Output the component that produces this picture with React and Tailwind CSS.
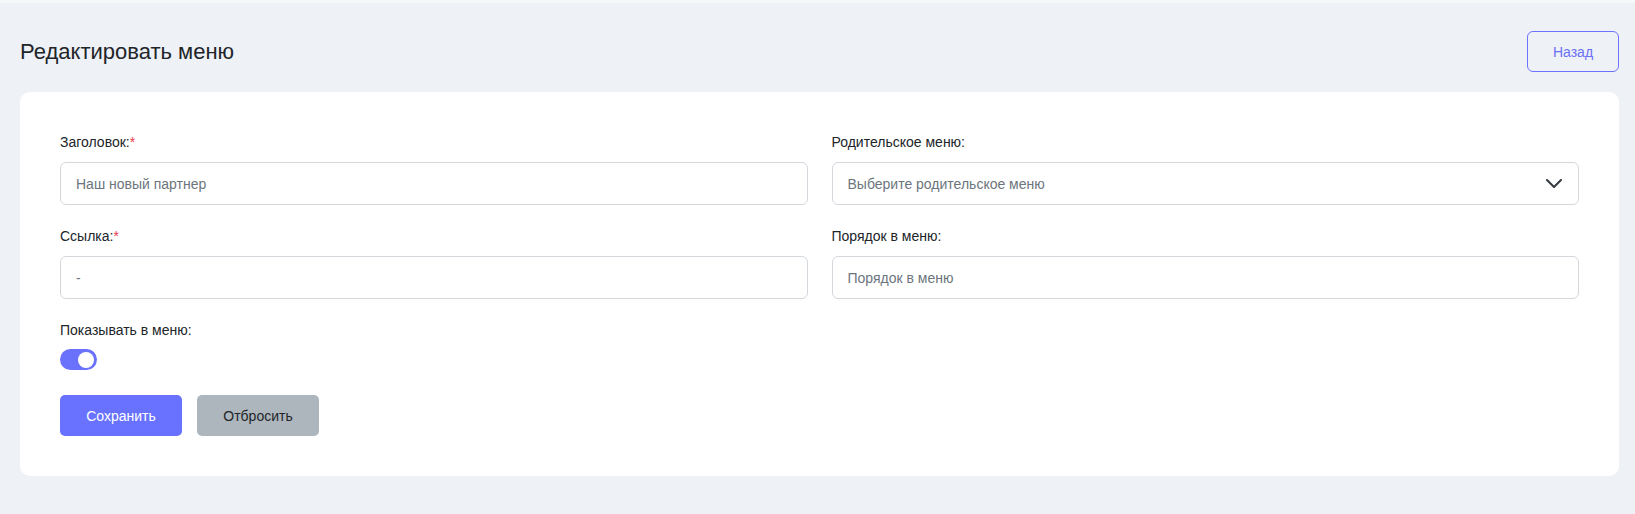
import React, { useState } from "react";

function Field({ label, required, children }) {
  return (
    <div>
      <div className="text-sm leading-5 text-[#212529] mb-2.5">
        {label}
        {required && <span className="text-[#e8394d]">*</span>}
      </div>
      {children}
    </div>
  );
}

function TextInput({ placeholder, value }) {
  return (
    <div className="h-[43px] border border-[#d4d8dd] rounded-md px-[15px] flex items-center text-sm text-[#6c757d]">
      {value ?? placeholder}
    </div>
  );
}

export default function App() {
  const [shown, setShown] = useState(true);

  return (
    <div className="min-h-screen bg-[#eef1f6] font-['Liberation_Sans',Arial,sans-serif]">
      <div className="h-[3px] bg-[#f6f7f9]" />
      <div className="pl-5 pr-4">
        <div className="flex items-center justify-between pt-[28px]">
          <h1 className="text-[22px] leading-[41px] text-[#212529]">Редактировать меню</h1>
          <button className="w-[92px] h-[41px] border border-[#6c72ff] rounded-md text-sm text-[#6b70f5]">
            Назад
          </button>
        </div>

        <div className="mt-5 bg-white rounded-[10px] p-10">
          <div className="grid grid-cols-2 gap-x-6 gap-y-[21px]">
            <Field label="Заголовок:" required>
              <TextInput placeholder="Наш новый партнер" />
            </Field>
            <Field label="Родительское меню:">
              <div className="h-[43px] border border-[#d4d8dd] rounded-md pl-[15px] pr-[16px] flex items-center justify-between text-sm text-[#6c757d]">
                <span>Выберите родительское меню</span>
                <svg width="16" height="9" viewBox="0 0 16 9" fill="none" stroke="#343a40" strokeWidth="2" strokeLinecap="round" strokeLinejoin="round">
                  <path d="M1 1l7 7 7-7" />
                </svg>
              </div>
            </Field>
            <Field label="Ссылка:" required>
              <TextInput value="-" />
            </Field>
            <Field label="Порядок в меню:">
              <TextInput placeholder="Порядок в меню" />
            </Field>
          </div>

          <div className="mt-[21px]">
            <div className="text-sm leading-5 text-[#212529] mb-[9px]">Показывать в меню:</div>
            <button
              onClick={() => setShown((v) => !v)}
              className={`w-[37px] h-[21px] rounded-full flex items-center px-[3px] ${shown ? "bg-[#6a72fb] justify-end" : "bg-[#d4d8dd] justify-start"}`}
            >
              <span className="w-4 h-4 rounded-full bg-white" />
            </button>
          </div>

          <div className="mt-[25px] flex gap-[15px]">
            <button className="w-[122px] h-[41px] rounded-[5px] bg-[#6872ff] text-white text-sm">Сохранить</button>
            <button className="w-[122px] h-[41px] rounded-[5px] bg-[#adb5bd] text-[#212529] text-sm">Отбросить</button>
          </div>
        </div>
      </div>
    </div>
  );
}
